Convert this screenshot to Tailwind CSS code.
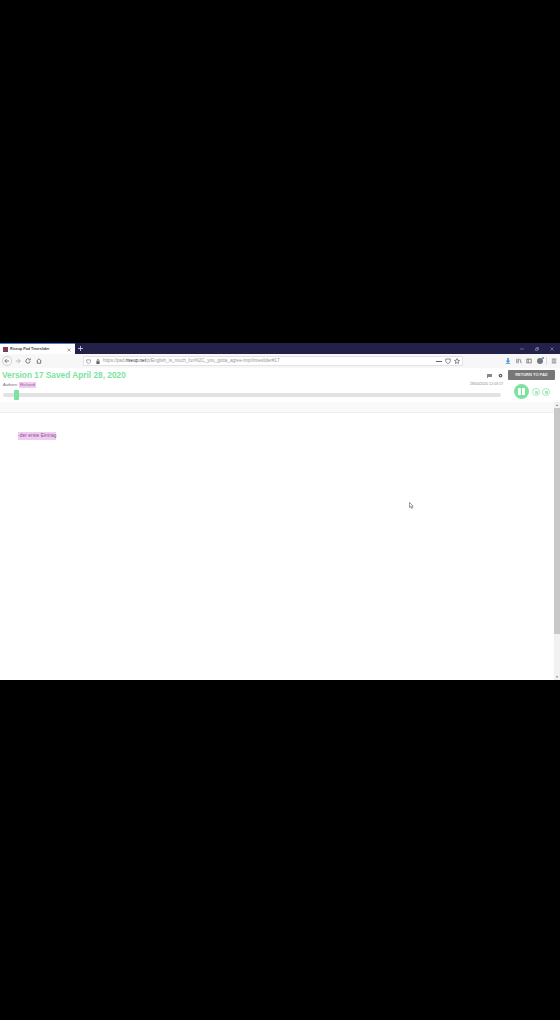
<!doctype html>
<html>
<head>
<meta charset="utf-8">
<title>Riseup Pad Timeslider</title>
<script src="https://cdn.jsdelivr.net/npm/@tailwindcss/browser@4"></script>
</head>
<body class="bg-black font-['Liberation_Sans',Arial,sans-serif]">
<div class="w-[560px] h-[1020px] bg-black overflow-hidden">
  <div class="h-[343px]"></div>

  <div class="relative h-[337px] bg-white flex flex-col">
    <!-- tab bar -->
    <div class="h-[11px] bg-[#23214a] flex items-stretch">
      <div class="w-[75px] bg-white border-t border-[#3d7fd6] flex items-center pt-[1px] pl-[3px] pr-[4px]">
        <span class="w-[5px] h-[5px] bg-[#7a3f5c] mr-[2px]"></span>
        <span class="text-[3.700px] font-bold text-[#444] whitespace-nowrap">Riseup Pad Timeslider</span>
        <svg class="ml-auto w-[4px] h-[4px] text-[#666]" viewBox="0 0 8 8" fill="none" stroke="currentColor" stroke-width="1.2"><path d="M1 1l6 6M7 1l-6 6"/></svg>
      </div>
      <svg class="ml-[3px] my-auto w-[5px] h-[5px] text-[#d8d8e4]" viewBox="0 0 8 8" fill="none" stroke="currentColor" stroke-width="1.3"><path d="M4 0v8M0 4h8"/></svg>
      <div class="ml-auto flex items-center gap-[11px] pr-[6px] text-[#9a99b4]">
        <svg class="w-[4px] h-[4px]" viewBox="0 0 8 8" fill="none" stroke="currentColor" stroke-width="1.2"><path d="M0 4h8"/></svg>
        <svg class="w-[4px] h-[4px]" viewBox="0 0 8 8" fill="none" stroke="currentColor" stroke-width="1.2"><path d="M1 3h4v4H1zM3 3V1h4v4H5"/></svg>
        <svg class="w-[4px] h-[4px]" viewBox="0 0 8 8" fill="none" stroke="currentColor" stroke-width="1.2"><path d="M1 1l6 6M7 1l-6 6"/></svg>
      </div>
    </div>

    <!-- toolbar -->
    <div class="h-[14px] bg-[#f7f7f8] flex items-center pl-[2px]">
      <div class="w-[10px] h-[10px] rounded-full border border-[#ccc] bg-white flex items-center justify-center">
        <svg class="w-[6px] h-[6px] text-[#555]" viewBox="0 0 8 8" fill="none" stroke="currentColor" stroke-width="1"><path d="M7 4H1M4 1L1 4l3 3"/></svg>
      </div>
      <svg class="ml-[3px] w-[6px] h-[6px] text-[#aaa]" viewBox="0 0 8 8" fill="none" stroke="currentColor" stroke-width="1"><path d="M1 4h6M4 1l3 3-3 3"/></svg>
      <svg class="ml-[4px] w-[6px] h-[6px] text-[#555]" viewBox="0 0 8 8" fill="none" stroke="currentColor" stroke-width="1"><path d="M6.800 4.400A2.900 2.900 0 1 1 5.800 1.700M7 .6v2H5"/></svg>
      <svg class="ml-[4.500px] w-[6px] h-[6px] text-[#555]" viewBox="0 0 8 8" fill="none" stroke="currentColor" stroke-width="1"><path d="M.8 4.200L4 1l3.200 3.200M1.800 3.600V7h4.400V3.600"/></svg>
      <div class="ml-[41.500px] w-[380px] h-[10px] bg-white border border-[#e2e2e2] rounded-[1px] flex items-center pl-[2px] pr-[2px]">
        <svg class="w-[5px] h-[5px] text-[#777]" viewBox="0 0 8 8" fill="none" stroke="currentColor" stroke-width="1"><path d="M1 1.300h6v2.600C7 5.800 5.500 6.900 4 7.500 2.500 6.900 1 5.800 1 3.900z"/></svg>
        <svg class="ml-[5px] w-[4px] h-[5px] text-[#666]" viewBox="0 0 6 8" fill="currentColor"><path d="M1 3.500V2.400a2 2 0 0 1 4 0v1.100h.6V8H.4V3.500zm1 0h2V2.400a1 1 0 0 0-2 0z"/></svg>
        <span class="ml-[3px] text-[4.600px] text-[#999] whitespace-nowrap">https://pad.<span class="text-[#333]">riseup.net</span>/p/English_is_much_fun%2C_you_gotta_agree-tmp/timeslider#17</span>
        <span class="ml-auto w-[6px] h-[1px] bg-[#666]"></span>
        <svg class="ml-[3px] w-[6px] h-[6px] text-[#666]" viewBox="0 0 8 8" fill="none" stroke="currentColor" stroke-width="1"><path d="M1 1.300h6v2.600C7 5.800 5.500 6.900 4 7.500 2.500 6.900 1 5.800 1 3.900z"/></svg>
        <svg class="ml-[3px] w-[6px] h-[6px] text-[#666]" viewBox="0 0 8 8" fill="none" stroke="currentColor" stroke-width="1"><path d="M4 .8l1 2.200 2.400.3-1.800 1.600.5 2.400L4 6.100 1.900 7.300l.5-2.400L.6 3.300 3 3z"/></svg>
      </div>
      <svg class="ml-[42px] w-[6px] h-[6px] text-[#3d8fd6]" viewBox="0 0 8 8" fill="currentColor"><path d="M3 0h2v3.500h2L4 6.500 1 3.500h2zM1 7h6v1H1z"/></svg>
      <svg class="ml-[4.500px] w-[6px] h-[6px] text-[#666]" viewBox="0 0 8 8" fill="none" stroke="currentColor" stroke-width="1"><path d="M1 1v6M3 1v6M5 1l2 6"/></svg>
      <svg class="ml-[4.500px] w-[6px] h-[6px] text-[#666]" viewBox="0 0 8 8" fill="none" stroke="currentColor" stroke-width="1"><path d="M1 1.500h6v5H1zM3 1.500v5"/></svg>
      <div class="relative ml-[4.500px] w-[6px] h-[6px] rounded-full bg-[#777]">
        <span class="absolute -top-[1px] -right-[1px] w-[2px] h-[2px] rounded-full bg-[#3d8fd6]"></span>
      </div>
      <span class="ml-[3.500px] w-px h-[8px] bg-[#ddd]"></span>
      <svg class="ml-[4px] w-[6px] h-[6px] text-[#555]" viewBox="0 0 8 8" fill="none" stroke="currentColor" stroke-width="1"><path d="M1 1.500h6M1 4h6M1 6.500h6"/></svg>
    </div>

    <!-- timeslider header -->
    <div class="h-[34px] bg-white flex">
      <div class="flex-1 min-w-0 pl-[2px] flex flex-col">
        <div class="h-[13px] pt-[2px] flex items-center justify-between pr-[2px]">
          <span class="text-[8.300px] font-bold text-[#7be3a0] whitespace-nowrap">Version 17 Saved April 28, 2020</span>
          <div class="flex items-center gap-[6px]">
            <svg class="w-[5px] h-[4px] text-[#888]" viewBox="0 0 5 4" fill="currentColor"><path d="M0 0h5v3H1v1H0z"/></svg>
            <svg class="w-[5px] h-[5px] text-[#666]" viewBox="0 0 8 8" fill="currentColor"><circle cx="4" cy="4" r="3"/><circle cx="4" cy="4" r="1" fill="#fff"/></svg>
          </div>
        </div>
        <div class="h-[8px] flex items-center justify-between pl-px pr-[2px]">
          <div class="flex items-center">
            <span class="text-[4px] text-[#666]">Authors:</span>
            <span class="ml-[1px] px-[1px] h-[6px] leading-[6px] bg-[#f5c8f7] text-[4.400px] text-[#777]">Richard</span>
          </div>
          <span class="text-[3.600px] text-[#888]">28/04/2020 12:03:17</span>
        </div>
        <div class="relative mt-[4px] ml-px h-[4px] w-[498px] rounded-full bg-[#e2e2e2]">
          <span class="absolute left-[11px] -top-[3px] w-[5px] h-[10px] rounded-[1px] bg-[#7be3a0]"></span>
        </div>
      </div>
      <div class="w-[55px] shrink-0 flex flex-col pl-[3px]">
        <div class="mt-[2px] w-[47px] h-[10px] bg-[#777] rounded-[1px] flex items-center justify-center text-[4px] font-bold text-[#eee] whitespace-nowrap">RETURN TO PAD</div>
        <div class="mt-[4px] ml-[6px] flex items-center">
          <div class="w-[15px] h-[15px] rounded-full bg-[#7be3a0] flex items-center justify-center gap-[1.500px]">
            <span class="w-[2.500px] h-[7px] bg-white rounded-[0.500px]"></span>
            <span class="w-[2.500px] h-[7px] bg-white rounded-[0.500px]"></span>
          </div>
          <div class="ml-[3px] mt-[1px] w-[8px] h-[8px] rounded-full border border-[#a5ebbd] flex items-center justify-center">
            <span class="w-[3px] h-[3px] bg-[#a5ebbd]"></span>
          </div>
          <div class="ml-[2px] mt-[1px] w-[8px] h-[8px] rounded-full border border-[#a5ebbd] flex items-center justify-center">
            <span class="w-[3px] h-[3px] bg-[#a5ebbd]"></span>
          </div>
        </div>
      </div>
    </div>

    <!-- pad area -->
    <div class="flex-1 flex min-h-0">
      <div class="flex-1 flex flex-col">
        <div class="h-[11px] bg-[#f9f9f9] border-b border-[#eeeeee]"></div>
        <div class="pl-[18px] pt-[19px]">
          <span class="block w-[38px] h-[8px] leading-[8px] bg-[#f5c8f7] text-[4.700px] tracking-[0.120px] text-[#666] whitespace-nowrap">-der erste Eintrag</span>
        </div>
      </div>
      <div class="w-[6px] bg-[#f1f1f1] flex flex-col items-center">
        <span class="h-[6px] text-[3px] leading-[6px] text-[#666]">▲</span>
        <span class="w-[6px] h-[226px] bg-[#c8c8c8]"></span>
        <span class="mt-auto h-[5px] text-[3px] leading-[5px] text-[#666]">▼</span>
      </div>
    </div>

    <!-- mouse pointer -->
    <svg class="absolute left-[409px] top-[159px] w-[5px] h-[7px]" viewBox="0 0 5 7" fill="#fff" stroke="#555" stroke-width="0.600"><path d="M.5.500v5l1.200-1 .9 2 .9-.4-.9-1.900H4.200z"/></svg>
  </div>
</div>
</body>
</html>
